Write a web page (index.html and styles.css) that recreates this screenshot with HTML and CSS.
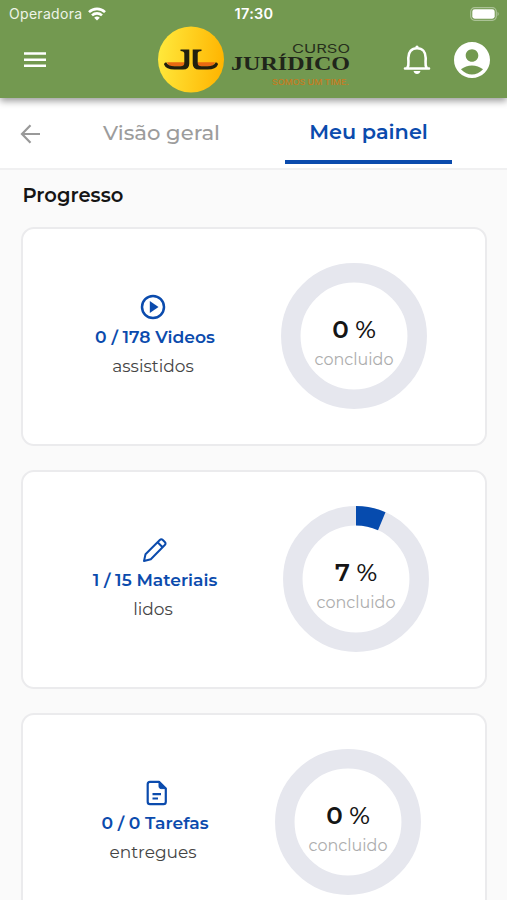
FILE: index.html
```
<!DOCTYPE html>
<html lang="pt-BR">
<head>
<meta charset="utf-8">
<meta name="viewport" content="width=device-width, initial-scale=1">
<title>Meu painel</title>
<link rel="stylesheet" href="styles.css">
</head>
<body>
<header class="header">
  <div class="status">
    <div class="carrier"><span class="carrier-name">Operadora</span>
      <svg width="18" height="14" viewBox="0 0 18 14" fill="none" stroke="#fff" stroke-width="2.6"><path d="M1 5.1a11.6 11.6 0 0 1 16 0M4 8.4a7.3 7.3 0 0 1 10 0"/><path d="M9 13.6 6.2 10.8a4 4 0 0 1 5.6 0z" fill="#fff" stroke="none"/></svg>
    </div>
    <time class="clock">17:30</time>
    <svg class="battery" width="30" height="14" viewBox="0 0 30 14"><rect x=".7" y=".7" width="25.6" height="12.6" rx="4" fill="none" stroke="#fff" stroke-opacity=".4" stroke-width="1.2"/><rect x="2.3" y="2.3" width="22.4" height="9.4" rx="2.4" fill="#fff"/><path d="M27.6 4.8q2 2.2 0 4.4z" fill="#fff" fill-opacity=".5"/></svg>
  </div>
  <div class="bar">
    <svg class="menu" width="24" height="18" viewBox="0 0 24 18"><path d="M1 2.500h22M1 8.700h22M1 14.800h22" stroke="#fff" stroke-width="2.500"/></svg>
    <svg class="logo" width="196" height="68" viewBox="0 0 196 68">
      <defs><linearGradient id="sun" x1="0" y1=".5" x2="1" y2=".6"><stop offset="0" stop-color="#ffe83b"/><stop offset="1" stop-color="#ffb400"/></linearGradient></defs>
      <circle cx="34" cy="33.500" r="33" fill="url(#sun)"/>
      <path d="M10 36.200h18v4.300H16q-5-.5-6-4.300zM58 36.200H40v4.300h12q5-.5 6-4.300z" fill="#e86a12"/>
      <path id="hook" d="M23.500 23.500h8.800V37.500q0 6-6.300 6H17.500q-8.500 0-10.500-5 0-1.800 2.200-2.200 1.800 4 8.300 4h6q3.800 0 3.800-3.300V27.500q0-2.500-3.800-2.500z" fill="#21200e"/>
      <use href="#hook" transform="matrix(-1 0 0 1 68 0)"/>
      <text class="logo-curso" x="135" y="27.300" textLength="58" lengthAdjust="spacingAndGlyphs">CURSO</text>
      <text class="logo-name" x="74" y="44" textLength="119" lengthAdjust="spacingAndGlyphs">JURÍDICO</text>
      <text class="logo-tag" x="115" y="59.300" textLength="77" lengthAdjust="spacingAndGlyphs">SOMOS UM TIME.</text>
    </svg>
    <svg class="bell" width="28" height="32" viewBox="0 0 28 32"><path d="M2 24.500h24M4.300 24C6.300 21 5.300 18.500 5.300 14 5.300 8 8.500 4.300 14 4.300s8.700 3.700 8.700 9.700c0 4.500-1 7 1 10" fill="none" stroke="#fff" stroke-width="2.600" stroke-linecap="round" stroke-linejoin="round"/><path d="M12.300 3.500a1.700 2 0 0 1 3.400 0zM10.500 27h7q-.8 3-3.500 3t-3.500-3z" fill="#fff"/></svg>
    <svg class="user" width="36" height="36" viewBox="2 2 20 20" fill="#fff"><path d="M12 2C6.480 2 2 6.480 2 12s4.480 10 10 10 10-4.480 10-10S17.520 2 12 2zm0 4c1.930 0 3.500 1.570 3.500 3.500S13.930 13 12 13s-3.500-1.570-3.500-3.500S10.070 6 12 6zm0 14c-2.030 0-4.430-.82-6.140-2.880a9.950 9.950 0 0 1 12.280 0C16.430 19.180 14.030 20 12 20z"/></svg>
  </div>
</header>
<nav class="tabs">
  <svg class="back" width="22" height="20" viewBox="0 0 22 20"><path d="M20 10H2M10.500 1.300 2 10l8.500 8.700" fill="none" stroke="#999" stroke-width="2.200"/></svg>
  <a class="tab">Visão geral</a>
  <a class="tab tab-active">Meu painel</a>
</nav>
<main class="content">
  <h1 class="title">Progresso</h1>
  <section class="card videos">
    <div class="info">
      <svg class="icon" width="26" height="26" viewBox="0 0 26 26"><circle cx="13" cy="13" r="11" fill="none" stroke="#0b4bad" stroke-width="2.500"/><path d="M9.800 7v12l8.700-6z" fill="#0b4bad"/></svg>
      <strong class="count">0 / 178 Videos</strong>
      <span class="label">assistidos</span>
    </div>
    <div class="donut">
      <svg class="ring" viewBox="0 0 146 146"><circle cx="73" cy="73" r="63.200" fill="none" stroke="#e6e7ee" stroke-width="19.500"/></svg>
      <div class="value"><b class="digit">0</b> %</div><div class="done">concluido</div>
    </div>
  </section>
  <section class="card materials">
    <div class="info">
      <svg class="icon pencil" width="26" height="26" viewBox="0 0 26 26" fill="none" stroke="#0b4bad" stroke-width="2" stroke-linejoin="round"><path d="M2 24l1.500-6.800L17.800 3q1.500-1.500 3 0l2 2q1.500 1.500 0 3L8.800 22.300zM15.600 5.200l5 5"/></svg>
      <strong class="count">1 / 15 Materiais</strong>
      <span class="label">lidos</span>
    </div>
    <div class="donut">
      <svg class="ring" viewBox="0 0 146 146"><circle cx="73" cy="73" r="63.200" fill="none" stroke="#e6e7ee" stroke-width="19.500"/><path d="M73 0A73 73 0 0 1 102.500 6.200L95 24.200A53.500 53.500 0 0 0 73 19.500z" fill="#064bae"/></svg>
      <div class="value"><b class="digit">7</b> %</div><div class="done">concluido</div>
    </div>
  </section>
  <section class="card tasks">
    <div class="info">
      <svg class="icon file" width="26" height="26" viewBox="0 0 26 26" fill="none" stroke="#0b4bad" stroke-width="2.200" stroke-linejoin="round"><path d="M15 1.800H6q-2.300 0-2.300 2.500v17.400q0 2.500 2.300 2.500h13.500q2.300 0 2.300-2.500V8.600z"/><path d="M15 1.800v4.700q0 2.100 2.100 2.100h4.700z" fill="#0b4bad" stroke-width="1"/><path d="M8.500 14.200h8.500M8.500 18.500h5.500"/></svg>
      <strong class="count">0 / 0 Tarefas</strong>
      <span class="label">entregues</span>
    </div>
    <div class="donut">
      <svg class="ring" viewBox="0 0 146 146"><circle cx="73" cy="73" r="63.200" fill="none" stroke="#e6e7ee" stroke-width="19.500"/></svg>
      <div class="value"><b class="digit">0</b> %</div><div class="done">concluido</div>
    </div>
  </section>
</main>
</body>
</html>
```
FILE: styles.css
```
* { box-sizing: border-box; }
html, body { height: 900px; overflow: hidden; }
body {
  margin: 0;
  background: #fafafa;
  color: #151515;
  font-family: Montserrat, Inter, "Open Sans", sans-serif;
  display: flex;
  flex-direction: column;
}
svg { display: block; flex: none; }
.header {
  position: relative;
  z-index: 1;
  flex: none;
  height: 98px;
  background: #739950;
  box-shadow: 0 3px 7px rgba(0, 0, 0, .4);
}
.status {
  height: 26px;
  padding: 0 7px 0 9px;
  display: grid;
  grid-template-columns: 1fr auto 1fr;
  align-items: center;
  color: #fff;
  font: 14px/26px Inter, sans-serif;
}
.carrier { display: flex; align-items: center; gap: 6px; color: #eef4e8; }
.carrier-name { padding-top: 1px; letter-spacing: .3px; }
.clock { font-weight: 600; font-size: 14.500px; padding-top: 1px; margin-right: 1px; letter-spacing: .3px; }
.battery { justify-self: end; }
.bar { display: flex; align-items: center; height: 67px; padding-left: 23px; }
.logo { margin-left: 110px; }
.bell { margin-left: 50px; }
.user { margin-left: 23px; }
.logo-curso { font: 11.500px Inter, sans-serif; fill: #27301c; }
.logo-name { font: bold 19.500px "Liberation Serif", serif; fill: #20251a; }
.logo-tag { font: 500 8px Inter, sans-serif; fill: #c77b20; }
.tabs {
  flex: none;
  height: 72px;
  display: flex;
  background: #fff;
  border-bottom: 2px solid #f0f0f1;
}
.back { margin: 26px 0 0 20px; }
.tab {
  width: 167px;
  height: 66px;
  margin-left: 36px;
  text-align: center;
  font-size: 21.200px;
  font-weight: 500;
  line-height: 68px;
  color: #9c9c9c;
  white-space: nowrap;
}
.tab-active { margin-left: 40px; color: #0b4bad; font-size: 20.800px; font-weight: 600; border-bottom: 4px solid #0b4bad; }
.content { padding: 0 20px 0 21px; }
.title { margin: 0 0 18px 1.500px; padding-top: 12px; font-size: 19.500px; line-height: 27px; font-weight: 600; }
.card {
  height: 219px;
  margin-bottom: 24px;
  background: #fff;
  border: 2px solid #ebebed;
  border-radius: 13px;
  display: grid;
  align-items: start;
}
.card:last-child { height: 187px; margin-bottom: 0; border-bottom: 0; border-radius: 13px 13px 0 0; }
.videos { grid-template-columns: 258px 146px; }
.materials { grid-template-columns: 260px 146px; }
.tasks { grid-template-columns: 252px 146px; }
.info { width: 260px; padding-top: 65px; display: flex; flex-direction: column; align-items: center; white-space: nowrap; }
.pencil { margin-left: 4px; }
.file { margin-left: 7px; }
.count { margin: 3px 0 0 4px; font-size: 17.200px; line-height: 28px; font-weight: 600; color: #0b4bad; }
.label { margin-top: 1px; font-size: 17px; line-height: 29px; color: #454545; }
.donut {
  display: grid;
  width: 146px;
  height: 146px;
  margin-top: 34px;
  grid-template-rows: 51px 30px 31px 1fr;
  justify-items: center;
}
.ring { grid-area: 1 / 1 / 5 / 2; width: 146px; height: 146px; }
.value { grid-area: 2 / 1; font-size: 24.500px; line-height: 30px; font-weight: 500; }
.digit { font-weight: 600; }
.done { grid-area: 3 / 1; font-size: 16px; line-height: 31px; color: #adadad; }
```
